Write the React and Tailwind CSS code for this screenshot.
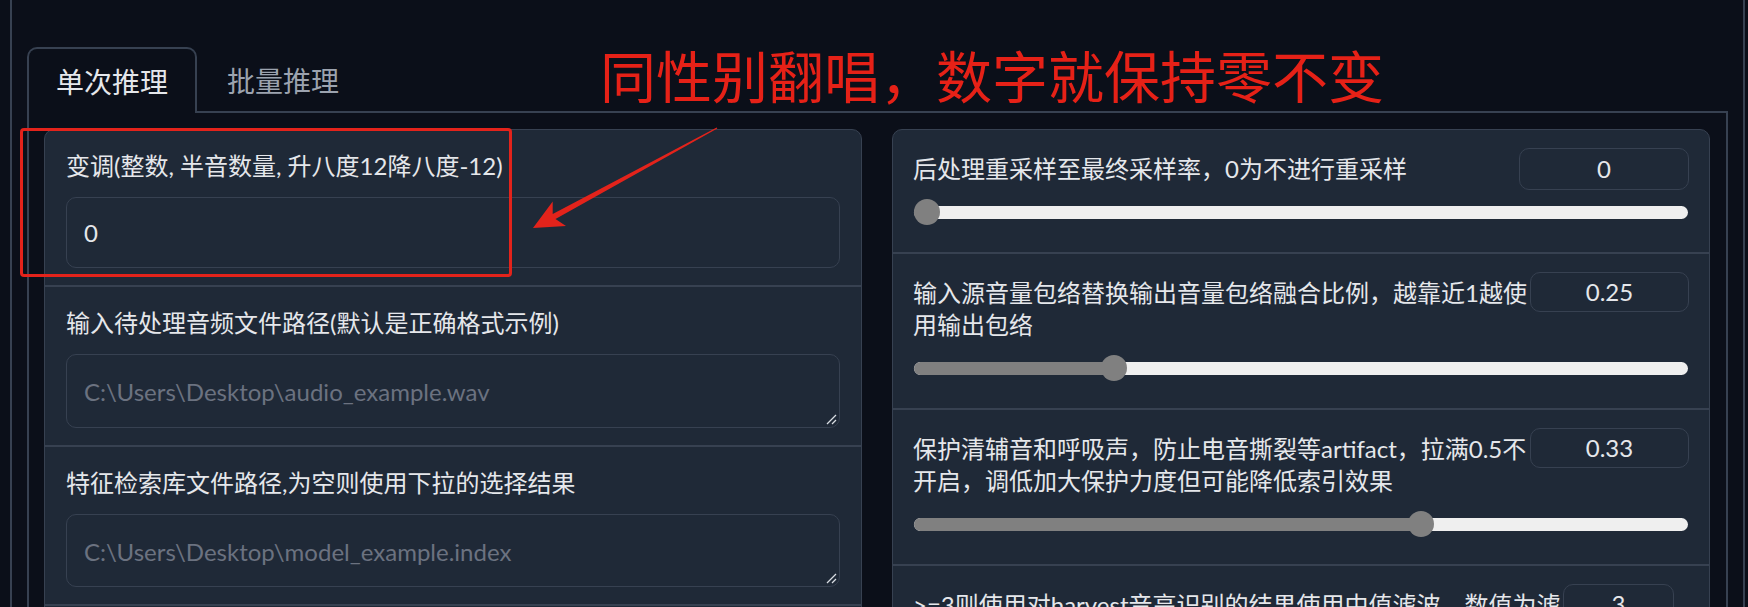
import React from "react";

const rightRows = [
  { lines: ["后处理重采样至最终采样率，0为不进行重采样"], value: "0", w: "w-[170px]", h: "h-[42px]", pct: 0 },
  { lines: ["输入源音量包络替换输出音量包络融合比例，越靠近1越使", "用输出包络"], value: "0.25", w: "w-[159px]", h: "h-[40px]", pct: 0.25 },
  { lines: ["保护清辅音和呼吸声，防止电音撕裂等artifact，拉满0.5不", "开启，调低加大保护力度但可能降低索引效果"], value: "0.33", w: "w-[159px]", h: "h-[40px]", pct: 0.66 },
  { lines: [">=3则使用对harvest音高识别的结果使用中值滤波，数值为滤", "波半径，使用可以削弱哑音"], value: "3", w: "w-[111px] mr-[15px]", h: "h-[40px]", pct: 0.43 },
];

function Grip() {
  return (
    <svg className="pointer-events-none absolute bottom-[3px] right-[3px]" width="12" height="12" viewBox="0 0 12 12">
      <line x1="11" y1="2" x2="2" y2="11" stroke="#d9dde3" strokeWidth="1.3" />
      <line x1="11" y1="7" x2="7" y2="11" stroke="#d9dde3" strokeWidth="1.3" />
    </svg>
  );
}

function Slider({ pct }) {
  return (
    <div className="relative mt-[14px] h-[26px] mx-[1px]">
      <div className="absolute left-0 right-0 top-[6.5px] h-[13px] rounded-full bg-[#efefef]" />
      <div
        className="absolute left-0 top-[6.5px] h-[13px] rounded-full bg-[#808080]"
        style={{ width: `calc((100% - 26px) * ${pct} + 13px)` }}
      />
      <div
        className="absolute top-0 h-[26px] w-[26px] rounded-full bg-[#808080]"
        style={{ left: `calc((100% - 26px) * ${pct})` }}
      />
    </div>
  );
}

function LeftSection({ label, children }) {
  return (
    <div className="border-b-2 border-[#374151] px-[21px] pb-[17px] pt-[20px]">
      <div className="whitespace-nowrap text-[24px] leading-[32px] text-[#e5e7eb]">{label}</div>
      <div className="mt-[15px]">{children}</div>
    </div>
  );
}

function RightSection({ row }) {
  return (
    <div className="border-b-2 border-[#374151] px-[20px] pb-[27px] pt-[18px]">
      <div className="flex items-start justify-between gap-[10px]">
        <div className="min-w-0 flex-1 pt-[5px] text-[24px] leading-[32px] text-[#e5e7eb]">
          {row.lines.map((l, i) => (
            <div key={i} className="whitespace-nowrap">{l}</div>
          ))}
        </div>
        <div
          className={`${row.w} ${row.h} -mb-[10px] flex shrink-0 items-center justify-center rounded-[10px] border border-[#374151] bg-[#1f2937] text-[24px] text-[#e5e7eb]`}
        >
          {row.value}
        </div>
      </div>
      <Slider pct={row.pct} />
    </div>
  );
}

export default function App() {
  return (
    <div className="relative h-[607px] w-[1748px] overflow-hidden bg-[#0b0f19] [font-family:Lato,'Noto_Sans_CJK_SC',sans-serif]">
      <div className="ml-[10px] h-full w-[1735px] border-x-2 border-[#374151] px-[15px] pt-[47px]">
        {/* Tabs header */}
        <div className="flex h-[66px]">
          <div className="flex items-center rounded-t-[10px] border-2 border-b-0 border-[#374151] px-[27px] pt-[2px] text-[28px] text-[#e5e7eb]">
            单次推理
          </div>
          <div className="flex flex-1 items-center border-b-2 border-[#374151]">
            <div className="px-[30px] pt-[4px] text-[28px] text-[#9ca3af]">批量推理</div>
          </div>
        </div>
        {/* Tab panel */}
        <div className="h-full border-x-2 border-[#374151] pl-[15px] pr-[16px] pt-[16px]">
          <div className="grid grid-cols-2 gap-[30px]">
            {/* Left card */}
            <div className="overflow-hidden rounded-[10px] border border-[#374151] bg-[#1f2937]">
              <LeftSection label="变调(整数, 半音数量, 升八度12降八度-12)">
                <input
                  defaultValue="0"
                  className="block h-[71px] w-full rounded-[10px] border border-[#374151] bg-[#1f2937] px-[17px] text-[24px] text-[#e5e7eb] outline-none"
                />
              </LeftSection>
              <LeftSection label="输入待处理音频文件路径(默认是正确格式示例)">
                <div className="relative">
                  <textarea
                    placeholder="C:\Users\Desktop\audio_example.wav"
                    className="block h-[74px] w-full resize-none rounded-[10px] border border-[#374151] bg-[#1f2937] px-[17px] pt-[21px] text-[24px] leading-[32px] text-[#e5e7eb] outline-none placeholder:text-[#6b7280]"
                  />
                  <Grip />
                </div>
              </LeftSection>
              <LeftSection label="特征检索库文件路径,为空则使用下拉的选择结果">
                <div className="relative">
                  <textarea
                    placeholder="C:\Users\Desktop\model_example.index"
                    className="block h-[73px] w-full resize-none rounded-[10px] border border-[#374151] bg-[#1f2937] px-[17px] pt-[21px] text-[24px] leading-[32px] text-[#e5e7eb] outline-none placeholder:text-[#6b7280]"
                  />
                  <Grip />
                </div>
              </LeftSection>
            </div>
            {/* Right card */}
            <div className="overflow-hidden rounded-[10px] border border-[#374151] bg-[#1f2937]">
              {rightRows.map((r, i) => (
                <RightSection key={i} row={r} />
              ))}
            </div>
          </div>
        </div>
      </div>

      {/* Annotations */}
      <div className="pointer-events-none absolute left-[600px] top-[46px] whitespace-nowrap text-[56px] font-normal leading-none text-[#e62117] [font-family:'Noto_Sans_CJK_SC',sans-serif]">
        同性别翻唱，数字就保持零不变
      </div>
      <div className="pointer-events-none absolute left-[20px] top-[128px] h-[149px] w-[492px] rounded-[4px] border-[3px] border-[#e3231b]" />
      <svg className="pointer-events-none absolute left-0 top-0" width="1748" height="607" viewBox="0 0 1748 607">
        <polygon
          points="533,228 566,226 555.5,219.1 717.3,128.6 716.7,127.4 552.7,213.9 552.7,201.4"
          fill="#e3231b"
        />
      </svg>
    </div>
  );
}
